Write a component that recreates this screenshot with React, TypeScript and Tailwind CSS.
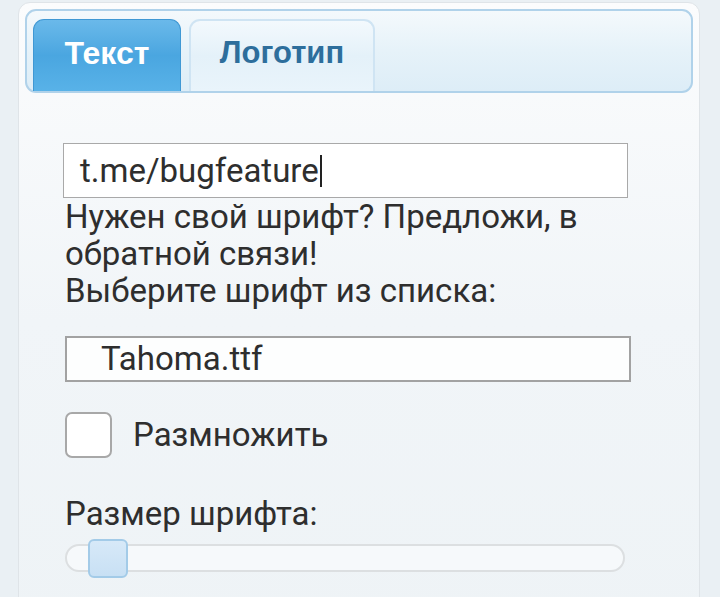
import React from 'react';

const body = "font-['Roboto','Noto_Sans',sans-serif]";

export default function App() {
  return (
    <div className={`h-[597px] w-[720px] overflow-hidden bg-[#eaf0f4] pl-[18px] pr-[20px] pt-[2px] ${body}`}>
      <div className="h-[640px] rounded-t-[12px] border border-[#dfe4e8] bg-gradient-to-b from-[#fbfcfd] via-[#f1f5f8] to-[#eef3f6] px-[6px] pt-[6px]">
        {/* tab bar */}
        <div className="flex h-[84px] items-end gap-[8px] rounded-[11px] border-2 border-[#b0d2ea] bg-gradient-to-b from-[#f4f9fc] via-[#e6f2f9] to-[#ddedf7] px-[6px]">
          <div className="flex h-[72px] w-[148px] items-center justify-center rounded-t-[11px] border border-b-0 border-[#3f98d4] bg-gradient-to-b from-[#6ab9ea] via-[#4aa6e0] to-[#58b2e8] pb-[6px] font-['Liberation_Sans',sans-serif] text-[32px] font-bold text-white">
            Текст
          </div>
          <div className="flex h-[72px] w-[186px] items-center justify-center rounded-t-[11px] border-2 border-b-0 border-[#cfe4f3] bg-gradient-to-b from-[#f3f9fd] via-[#e4f1f9] to-[#e9f4fb] pb-[6px] font-['Liberation_Sans',sans-serif] text-[31px] font-bold text-[#2d6e9c]">
            Логотип
          </div>
        </div>

        <div className="pl-[38px] pt-[50px] text-[33px] text-[#2e2e2e]">
          <div className="flex h-[55px] w-[565px] items-center border border-[#a9a9a9] bg-white pl-[16px]">
            <span className="leading-none">t.me/bugfeature</span>
            <span className="ml-[1px] h-[32px] w-[2px] bg-[#222]" />
          </div>
          <p className="w-[560px] pl-[2px] leading-[37px]">
            Нужен свой шрифт? Предложи, в обратной связи!
            <br />
            Выберите шрифт из списка:
          </p>

          <div className="ml-[2px] mt-[27px] flex h-[46px] w-[566px] items-center border-2 border-[#a2a2a2] bg-[#fdfefe] pl-[34px]">
            Tahoma.ttf
          </div>

          <label className="ml-[2px] mt-[28px] flex items-center gap-[21px]">
            <span className="h-[46px] w-[47px] rounded-[7px] border-2 border-[#a8a8a8] bg-white" />
            <span>Размножить</span>
          </label>

          <p className="ml-[2px] mt-[35px] leading-[37px]">Размер шрифта:</p>

          <div className="relative ml-[2px] mt-[12px] h-[28px] w-[560px] rounded-full border-2 border-[#dcdfe1] bg-[#f6f9fb]">
            <span className="absolute left-[21px] top-[-7px] h-[39px] w-[40px] rounded-[6px] border-2 border-[#a3cbe8] bg-gradient-to-b from-[#d7e9f8] to-[#c8e0f4]" />
          </div>
        </div>
      </div>
    </div>
  );
}
